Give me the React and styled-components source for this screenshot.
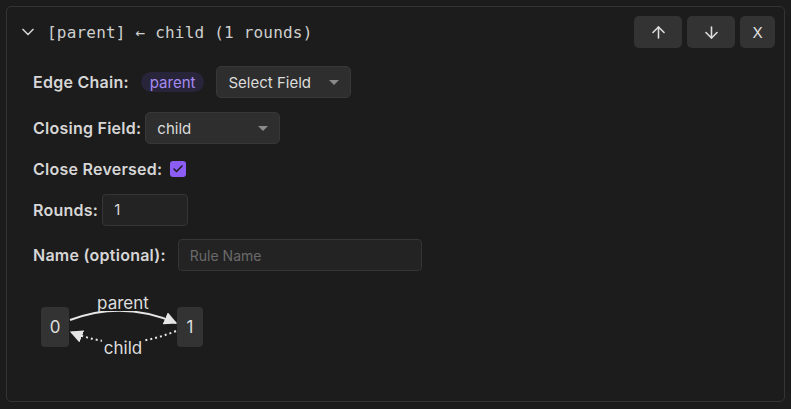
import React from "react";
import styled, { createGlobalStyle } from "styled-components";
import { ArrowUp, ArrowDown, ChevronDown, Check } from "lucide-react";

const GlobalStyle = createGlobalStyle`
  html, body {
    margin: 0;
    padding: 0;
    background-color: #1c1c1c;
    font-family: Inter, "Noto Sans", sans-serif;
  }
`;

const Page = styled.div`
  padding: 6px 6px 7px 6px;
  height: 409px;
  box-sizing: border-box;
`;

const Panel = styled.div`
  height: 100%;
  box-sizing: border-box;
  border: 1px solid #333333;
  border-radius: 5px;
  background-color: #1c1c1c;
  padding: 9px 9px 0 11px;
`;

const Header = styled.div`
  display: flex;
  align-items: center;
  height: 32px;
`;

const Toggle = styled.div`
  display: flex;
  align-items: center;
  color: #d0d0d0;
  width: 20px;
  margin-right: 9px;
`;

const Title = styled.div`
  flex: 1;
  font-family: "DejaVu Sans Mono", "Liberation Mono", monospace;
  font-size: 16px;
  color: #cfcfcf;
  letter-spacing: 0.2px;
`;

const HeaderButton = styled.button`
  display: flex;
  align-items: center;
  justify-content: center;
  width: ${(props) => props.width}px;
  height: 32px;
  margin-left: 5px;
  border: none;
  border-radius: 5px;
  background-color: #333333;
  color: #dedede;
  font-family: Inter, sans-serif;
  font-size: 15px;
  padding: 0;
`;

const Body = styled.div`
  display: flex;
  flex-direction: column;
  gap: 14px;
  padding: 18px 0 0 15px;
`;

const Row = styled.div`
  display: flex;
  align-items: center;
  gap: ${(props) => props.gap}px;
  height: ${(props) => props.height}px;
`;

const Label = styled.span`
  font-size: 16px;
  font-weight: 600;
  letter-spacing: 0.25px;
  color: #d6d6d6;
`;

const Pill = styled.span`
  display: inline-flex;
  align-items: center;
  height: 20px;
  padding: 0 9px;
  border-radius: 10px;
  background-color: #28243a;
  color: #a68bf0;
  font-size: 15px;
`;

const Select = styled.div`
  display: flex;
  align-items: center;
  justify-content: space-between;
  box-sizing: border-box;
  width: ${(props) => props.width}px;
  height: 32px;
  padding: 0 11px 0 11px;
  border: 1px solid #383838;
  border-radius: 5px;
  background-color: #2e2e2e;
  color: #dcdcdc;
  font-size: 15px;
`;

const Caret = styled.span`
  width: 0;
  height: 0;
  border-left: 5px solid transparent;
  border-right: 5px solid transparent;
  border-top: 5px solid #8a8a8a;
`;

const CheckBox = styled.span`
  display: flex;
  align-items: center;
  justify-content: center;
  width: 16px;
  height: 16px;
  border-radius: 3px;
  background-color: #8b5cf6;
  color: #1a1a1a;
`;

const TextInput = styled.input`
  box-sizing: border-box;
  width: ${(props) => props.width}px;
  height: 32px;
  padding: 0 11px;
  border: 1px solid #353535;
  border-radius: 4px;
  background-color: #232323;
  color: #d8d8d8;
  font-family: Inter, sans-serif;
  font-size: 15px;
  outline: none;
  &::placeholder {
    color: #6a6a6a;
    font-size: 14px;
  }
`;

const Graph = styled.svg`
  display: block;
  margin-top: 19px;
  margin-left: 21px;
`;

function ChainGraph() {
  return (
    <Graph width="180" height="80" viewBox="0 0 180 80">
      <defs>
        <marker
          id="arrow"
          viewBox="0 0 10 10"
          refX="9"
          refY="5"
          markerWidth="6.5"
          markerHeight="6.5"
          orient="auto-start-reverse"
        >
          <path d="M0 0 L10 5 L0 10 z" fill="#e6e6e6" />
        </marker>
      </defs>
      <rect x="2" y="17" width="28" height="40" rx="4" fill="#333333" />
      <rect x="138" y="17" width="26" height="40" rx="4" fill="#333333" />
      <text x="16" y="43" fontSize="17" fill="#dedede" textAnchor="middle" fontFamily="Inter, sans-serif">
        0
      </text>
      <text x="151" y="43" fontSize="17" fill="#dedede" textAnchor="middle" fontFamily="Inter, sans-serif">
        1
      </text>
      <path
        d="M31 30 Q84 10 137 33"
        fill="none"
        stroke="#e6e6e6"
        strokeWidth="2"
        markerEnd="url(#arrow)"
      />
      <path
        d="M137 41 Q84 63 32 42"
        fill="none"
        stroke="#e6e6e6"
        strokeWidth="2"
        strokeDasharray="2 3"
        markerEnd="url(#arrow)"
      />
      <rect x="56" y="2" width="56" height="19" fill="#1c1c1c" />
      <text x="84" y="19" fontSize="17" fill="#dedede" textAnchor="middle" fontFamily="Inter, sans-serif">
        parent
      </text>
      <rect x="63" y="49" width="42" height="19" fill="#1c1c1c" />
      <text x="84" y="64" fontSize="17" fill="#dedede" textAnchor="middle" fontFamily="Inter, sans-serif">
        child
      </text>
    </Graph>
  );
}

export default function App() {
  return (
    <>
      <GlobalStyle />
      <Page>
        <Panel>
          <Header>
            <Toggle>
              <ChevronDown size={20} strokeWidth={2} />
            </Toggle>
            <Title>[parent] ← child (1 rounds)</Title>
            <HeaderButton width={48}>
              <ArrowUp size={19} strokeWidth={2} />
            </HeaderButton>
            <HeaderButton width={48}>
              <ArrowDown size={19} strokeWidth={2} />
            </HeaderButton>
            <HeaderButton width={35}>X</HeaderButton>
          </Header>
          <Body>
            <Row gap={12} height={32}>
              <Label>Edge Chain:</Label>
              <Pill>parent</Pill>
              <Select width={135}>
                Select Field
                <Caret />
              </Select>
            </Row>
            <Row gap={4} height={32}>
              <Label>Closing Field:</Label>
              <Select width={135}>
                child
                <Caret />
              </Select>
            </Row>
            <Row gap={8} height={22}>
              <Label>Close Reversed:</Label>
              <CheckBox>
                <Check size={12} strokeWidth={3} />
              </CheckBox>
            </Row>
            <Row gap={4} height={31}>
              <Label>Rounds:</Label>
              <TextInput width={86} defaultValue="1" />
            </Row>
            <Row gap={12} height={32}>
              <Label>Name (optional):</Label>
              <TextInput width={244} placeholder="Rule Name" />
            </Row>
          </Body>
          <ChainGraph />
        </Panel>
      </Page>
    </>
  );
}
